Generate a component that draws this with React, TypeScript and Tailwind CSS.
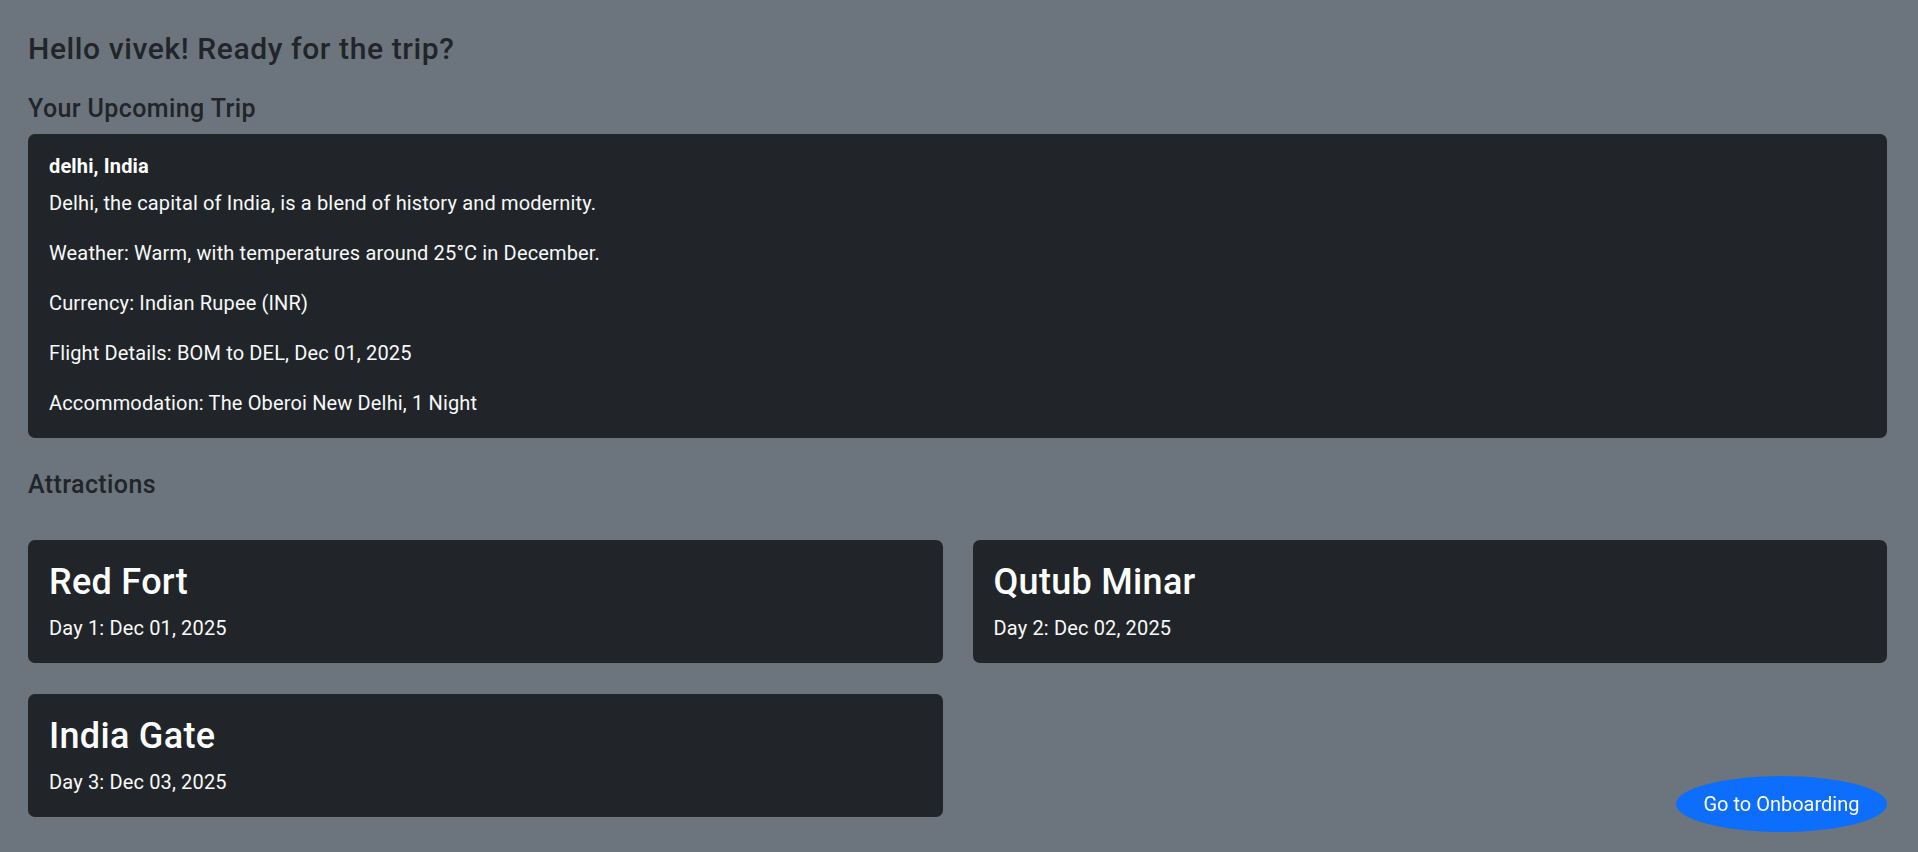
import React from "react";

const attractions = [
  { name: "Red Fort", day: "Day 1: Dec 01, 2025" },
  { name: "Qutub Minar", day: "Day 2: Dec 02, 2025" },
  { name: "India Gate", day: "Day 3: Dec 03, 2025" },
];

export default function App() {
  return (
    <div
      className="min-h-screen bg-[#6c757d] pl-[28px] pr-[31px] pt-[31px] pb-[40px]"
      style={{ fontFamily: "Roboto, 'Noto Sans', sans-serif" }}
    >
      <h4 className="text-[30px] leading-[36px] font-medium text-[#212529] tracking-[0.6px]">
        Hello vivek! Ready for the trip?
      </h4>
      <h5 className="mt-[27px] mb-[10px] text-[25px] leading-[30px] font-medium text-[#212529] tracking-[0.4px]">
        Your Upcoming Trip
      </h5>
      <div className="rounded-[7px] bg-[#212529] px-[21px] pt-[17px] pb-[20px] text-[20px] leading-[30px] text-[#f8f9fa] tracking-[0.15px]">
        <div className="font-bold text-white">delhi, India</div>
        <div className="mt-[7px] flex flex-col gap-[20px]">
          <p>Delhi, the capital of India, is a blend of history and modernity.</p>
          <p>Weather: Warm, with temperatures around 25°C in December.</p>
          <p>Currency: Indian Rupee (INR)</p>
          <p>Flight Details: BOM to DEL, Dec 01, 2025</p>
          <p>Accommodation: The Oberoi New Delhi, 1 Night</p>
        </div>
      </div>
      <h5 className="mt-[32px] mb-[40px] text-[25px] leading-[30px] font-medium text-[#212529] tracking-[0.4px]">
        Attractions
      </h5>
      <div className="grid grid-cols-2 gap-x-[30px] gap-y-[31px]">
        {attractions.map((a) => (
          <div
            key={a.name}
            className="rounded-[7px] bg-[#212529] px-[21px] pt-[21px] pb-[20px] text-white"
          >
            <h3 className="text-[36px] leading-[42px] font-medium tracking-[0.3px]">{a.name}</h3>
            <p className="mt-[10px] text-[20px] leading-[30px] text-[#f8f9fa] tracking-[0.15px]">{a.day}</p>
          </div>
        ))}
      </div>
      <button className="fixed right-[31px] bottom-[20px] w-[211px] h-[56px] rounded-[50%] bg-[#0d6efd] text-white text-[20px] leading-[30px]">
        Go to Onboarding
      </button>
    </div>
  );
}
